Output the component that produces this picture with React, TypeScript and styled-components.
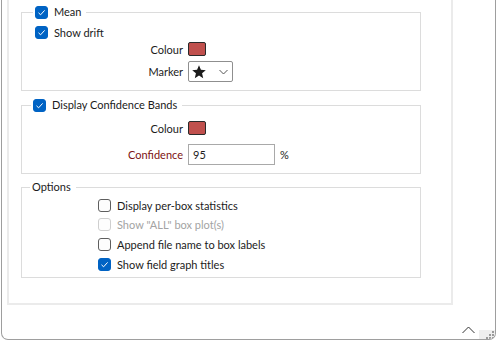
import React from 'react'
import styled, { createGlobalStyle } from 'styled-components'

const GlobalStyle = createGlobalStyle`
  html, body {
    margin: 0;
    padding: 0;
    background: #ffffff;
  }
  body {
    font-family: Lato, "Noto Sans", "Liberation Sans", sans-serif;
    font-size: 11px;
    color: #1b1b1b;
  }
`

const Window = styled.div`
  box-sizing: border-box;
  width: 495px;
  height: 340px;
  margin-left: 1px;
  border: 1px solid #9e9e9e;
  border-top: none;
  border-radius: 0 0 7px 7px;
  background: #ffffff;
  display: flex;
  flex-direction: column;
  overflow: hidden;
`

const Panel = styled.div`
  box-sizing: border-box;
  width: 446px;
  margin-left: 5px;
  border: 2px solid #ebebeb;
  border-top: none;
  padding: 4px 0 25px 12px;
  display: flex;
  flex-direction: column;
`

const Group = styled.fieldset<{ $top?: number; $bottom?: number }>`
  box-sizing: border-box;
  width: 400px;
  margin: ${(p) => p.$top ?? 0}px 0 0 0;
  padding: 0 0 ${(p) => p.$bottom ?? 8}px 0;
  border: 1px solid #dcdcdc;
  min-width: 0;
`

const Legend = styled.legend<{ $indent: number }>`
  margin-left: ${(p) => p.$indent}px;
  padding: 0 5px 0 2px;
  height: 16px;
  display: flex;
  align-items: center;
  gap: 6px;
  line-height: 16px;
`

const CheckRow = styled.label<{ $indent: number; $top?: number; $disabled?: boolean }>`
  display: flex;
  align-items: center;
  gap: 6px;
  height: 16px;
  margin-left: ${(p) => p.$indent}px;
  margin-top: ${(p) => p.$top ?? 0}px;
  color: ${(p) => (p.$disabled ? '#a3a3a3' : 'inherit')};
`

const Box = styled.span<{ $checked?: boolean; $disabled?: boolean }>`
  box-sizing: border-box;
  width: 13px;
  height: 13px;
  border-radius: 3px;
  flex: none;
  display: flex;
  align-items: center;
  justify-content: center;
  background: ${(p) => (p.$checked ? '#0063c4' : '#fdfdfd')};
  border: 1px solid
    ${(p) => (p.$checked ? '#0063c4' : p.$disabled ? '#cfcfcf' : '#5e5e5e')};
`

const FieldRow = styled.div<{ $top: number }>`
  display: grid;
  grid-template-columns: 161px auto auto;
  column-gap: 5px;
  align-items: center;
  justify-content: start;
  margin-top: ${(p) => p.$top}px;
`

const FieldLabel = styled.span<{ $tone?: 'alert' }>`
  text-align: right;
  color: ${(p) => (p.$tone === 'alert' ? '#7d1212' : 'inherit')};
`

const Swatch = styled.span`
  box-sizing: border-box;
  width: 18px;
  height: 14px;
  border: 1px solid #2a2a2a;
  border-radius: 2px;
  background: #c0504d;
`

const Select = styled.div`
  box-sizing: border-box;
  width: 45px;
  height: 21px;
  border: 1px solid #8f8f8f;
  border-radius: 2px;
  display: flex;
  align-items: center;
  justify-content: space-between;
  padding: 0 4px 0 2px;
  background: #fff;
`

const Input = styled.div`
  box-sizing: border-box;
  width: 87px;
  height: 21px;
  border: 1px solid #a9a9a9;
  padding: 0 4px;
  display: flex;
  align-items: center;
`

const Unit = styled.span`
  margin-left: 0;
`

const OptionList = styled.div`
  display: flex;
  flex-direction: column;
  gap: 3.7px;
  padding: 2px 0 0 0;
`

const Footer = styled.div`
  flex: 1;
  display: flex;
  align-items: flex-end;
  justify-content: flex-end;
  gap: 4px;
`

const Chevron = styled.svg`
  margin-bottom: 5px;
`

const Grip = styled.div`
  width: 16px;
  height: 9px;
  background: #eeeeee;
  display: flex;
  align-items: flex-end;
  justify-content: flex-end;
`

const Check = ({ checked, disabled }: { checked?: boolean; disabled?: boolean }) => (
  <Box $checked={checked} $disabled={disabled}>
    {checked && (
      <svg width="9" height="9" viewBox="0 0 9 9">
        <path d="M1.5 4.8 L3.6 6.8 L7.6 2.4" fill="none" stroke="#fff" strokeWidth="1" />
      </svg>
    )}
  </Box>
)

const options = [
  { text: 'Display per-box statistics', checked: false, disabled: false },
  { text: 'Show "ALL" box plot(s)', checked: false, disabled: true },
  { text: 'Append file name to box labels', checked: false, disabled: false },
  { text: 'Show field graph titles', checked: true, disabled: false },
]

export default function App() {
  return (
    <>
      <GlobalStyle />
      <Window>
        <Panel>
          <Group>
            <Legend $indent={11}>
              <Check checked />
              <span>Mean</span>
            </Legend>
            <CheckRow $indent={13} $top={4}>
              <Check checked />
              <span>Show drift</span>
            </CheckRow>
            <FieldRow $top={2}>
              <FieldLabel>Colour</FieldLabel>
              <Swatch />
            </FieldRow>
            <FieldRow $top={5}>
              <FieldLabel>Marker</FieldLabel>
              <Select>
                <svg width="16" height="16" viewBox="0 0 24 24">
                  <path
                    d="M12 1.8 L14.9 8.6 L22.2 9.2 L16.6 14 L18.3 21.2 L12 17.4 L5.7 21.2 L7.4 14 L1.8 9.2 L9.1 8.6 Z"
                    fill="#1b1b1b"
                  />
                </svg>
                <svg width="9" height="6" viewBox="0 0 9 6">
                  <path d="M0.5 1 L4.5 5 L8.5 1" fill="none" stroke="#555" strokeWidth="1" />
                </svg>
              </Select>
            </FieldRow>
          </Group>

          <Group $top={6}>
            <Legend $indent={9}>
              <Check checked />
              <span>Display Confidence Bands</span>
            </Legend>
            <FieldRow $top={8}>
              <FieldLabel>Colour</FieldLabel>
              <Swatch />
            </FieldRow>
            <FieldRow $top={9}>
              <FieldLabel $tone="alert">Confidence</FieldLabel>
              <Input>95</Input>
              <Unit>%</Unit>
            </FieldRow>
          </Group>

          <Group $top={5} $bottom={5}>
            <Legend $indent={8}>
              <span>Options</span>
            </Legend>
            <OptionList>
              {options.map((o) => (
                <CheckRow key={o.text} $indent={76} $disabled={o.disabled}>
                  <Check checked={o.checked} disabled={o.disabled} />
                  <span>{o.text}</span>
                </CheckRow>
              ))}
            </OptionList>
          </Group>
        </Panel>
        <Footer>
          <Chevron width="13" height="8" viewBox="0 0 13 8">
            <path d="M0.5 7 L6.5 1 L12.5 7" fill="none" stroke="#333" strokeWidth="1" />
          </Chevron>
          <Grip>
            <svg width="12" height="9" viewBox="0 0 12 9">
              <rect x="9" y="1" width="2" height="2" fill="#9a9a9a" />
              <rect x="6" y="4" width="2" height="2" fill="#9a9a9a" />
              <rect x="9" y="4" width="2" height="2" fill="#9a9a9a" />
              <rect x="3" y="7" width="2" height="2" fill="#9a9a9a" />
              <rect x="6" y="7" width="2" height="2" fill="#9a9a9a" />
              <rect x="9" y="7" width="2" height="2" fill="#9a9a9a" />
            </svg>
          </Grip>
        </Footer>
      </Window>
    </>
  )
}
